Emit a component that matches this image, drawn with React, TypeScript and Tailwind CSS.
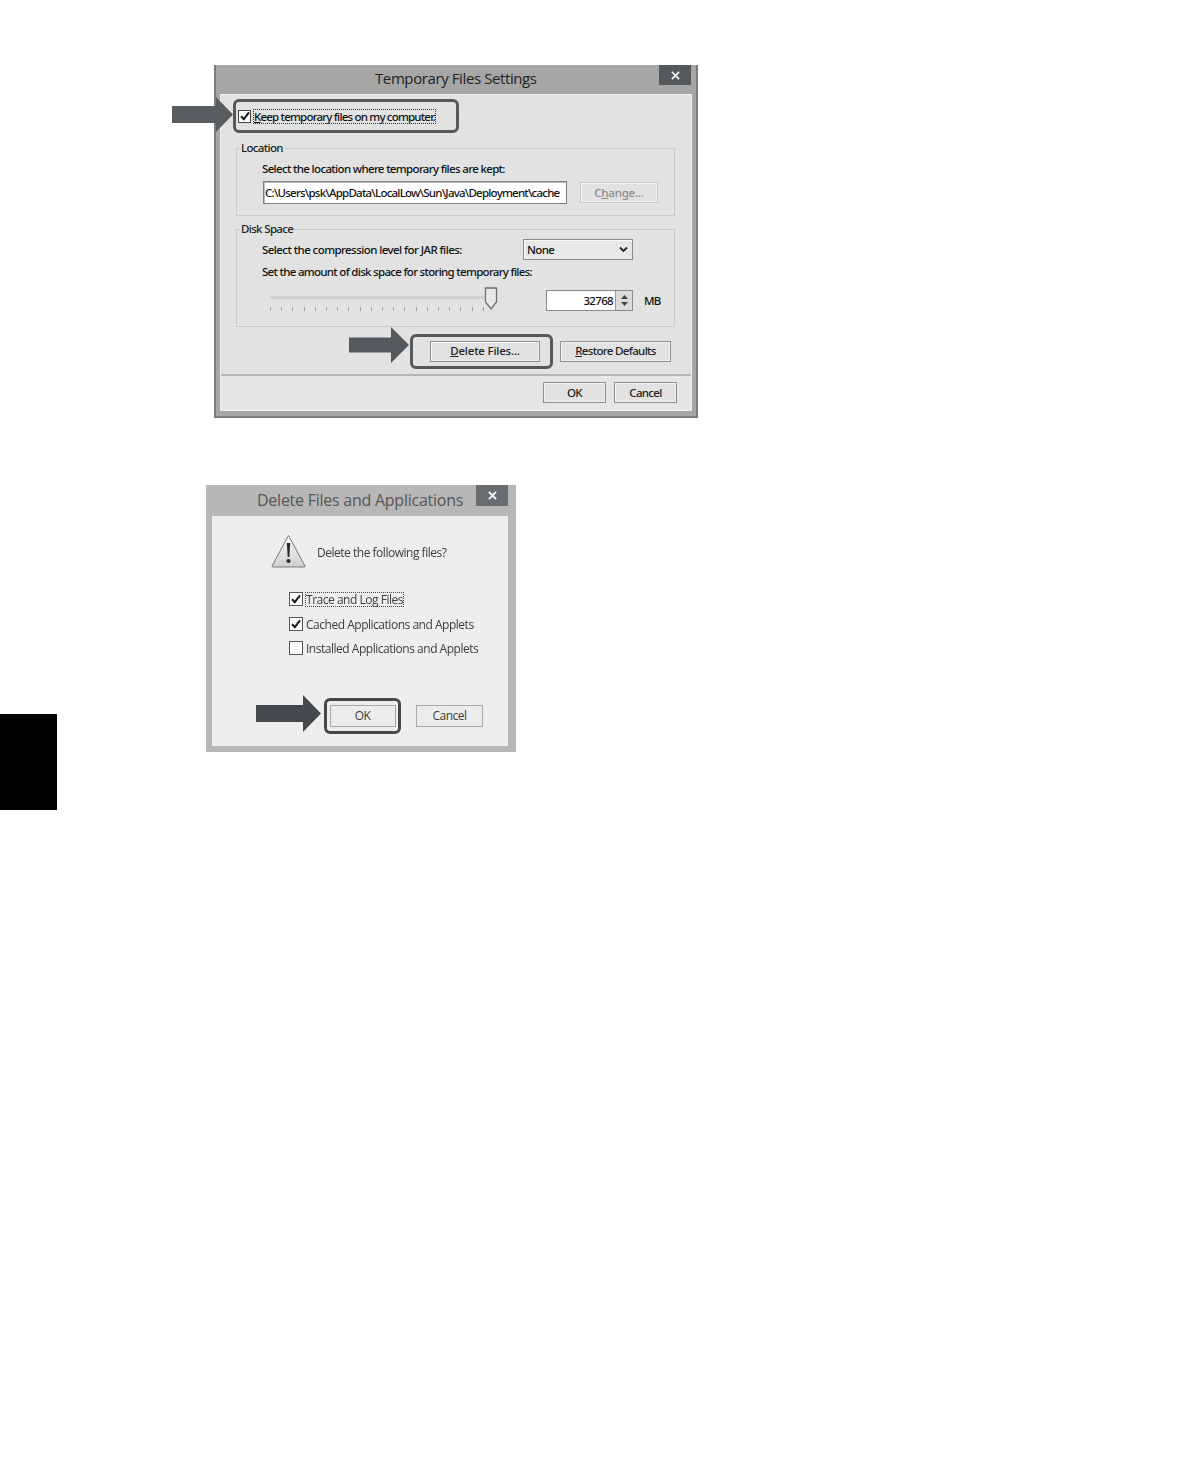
const tahoma = "font-['Noto_Sans','Open_Sans',sans-serif]";
const segoe = "font-['Open_Sans','Noto_Sans',sans-serif]";

function Arrow({ width, height, shaft, head, color, className }: { width: number; height: number; shaft: number; head: number; color: string; className?: string }) {
  const c = height / 2;
  const neck = width - head;
  return (
    <svg width={width} height={height} viewBox={`0 0 ${width} ${height}`} className={`shrink-0 block ${className ?? ""}`}>
      <path
        d={`M0 ${c - shaft / 2} H${neck} V0 L${width} ${c} L${neck} ${height} V${c + shaft / 2} H0 Z`}
        fill={color}
      />
    </svg>
  );
}

function Close({ size }: { size: number }) {
  return (
    <svg width={size} height={size} viewBox="0 0 10 10" className="block">
      <path d="M1 1 L9 9 M9 1 L1 9" stroke="#ffffff" strokeWidth="1.8" />
    </svg>
  );
}

function Tick() {
  return (
    <svg width="10" height="10" viewBox="0 0 10 10" className="block">
      <path d="M1 5.2 L3.8 8.2 L9 1.4" fill="none" stroke="#1a1a1a" strokeWidth="2" />
    </svg>
  );
}

function Btn({ children, w, disabled, wide }: { children: React.ReactNode; w: string; disabled?: boolean; wide?: boolean }) {
  return (
    <div
      className={`${w} h-[21px] shrink-0 flex items-center justify-center border shadow-[inset_1px_1px_0_#f6f6f6,inset_-1px_-1px_0_#f0f0f0] bg-[#e2e2e2] ${
        disabled ? "border-[#c6c6c6] text-[#8a8a8a]" : "border-[#8f8f8f] text-[#222]"
      } ${wide ? "tracking-[-0.2px]" : ""}`}
    >
      <span>{children}</span>
    </div>
  );
}

function Group({ label, h, mt, children }: { label: string; h: string; mt: string; children: React.ReactNode }) {
  return (
    <fieldset className={`${h} ${mt} ml-[15px] w-[439px] border border-[#c9c9c9] pl-[25px] box-border`}>
      <legend className="-ml-[22px] px-[1px] h-[16px] leading-[16px] text-[#222]">{label}</legend>
      {children}
    </fieldset>
  );
}

function TemporaryFiles() {
  return (
    <div className={`${tahoma} relative ml-[157px] w-[484px] h-[353px] bg-[#a6a6a6] border-x-2 border-b-2 border-[#7c7c7c] text-[11.5px] font-medium tracking-[-0.66px] box-border`}>
      <div className="flex h-[29px] relative">
        <div className={`${segoe} ml-[159px] mt-[2px] text-[15px] font-normal tracking-[-0.4px] leading-[22px] text-[#222]`}>
          Temporary Files Settings
        </div>
        <div className="ml-auto mr-[5px] w-[32px] h-[20px] bg-[#56595c] flex items-center justify-center">
          <Close size={9} />
        </div>
      </div>
      <div className="absolute left-[-44px] top-[32px]">
        <Arrow width={61} height={35} shaft={17} head={17} color="#595d60" />
      </div>
      <div className="mx-[4px] h-[317px] bg-[#e2e2e2] border border-[#f0f0f0] flex flex-col box-border">
        <div className="ml-[12px] mt-[4px] w-[226px] h-[34px] border-[3px] border-[#55595c] rounded-[6px] flex items-center pl-[2px] box-border">
          <div className="w-[13px] h-[13px] border border-[#444] bg-white flex items-center justify-center shrink-0">
            <Tick />
          </div>
          <div className="ml-[3px] outline-1 outline-dotted outline-[#333] leading-[13px] text-[#111] whitespace-nowrap tracking-[-0.8px]">
            <u>K</u>eep temporary files on my computer.
          </div>
        </div>
        <Group label="Location" h="h-[76px]" mt="mt-[7px]">
          <div className="mt-[5px] h-[16px] leading-[16px] text-[#111] whitespace-nowrap">
            Select the location where temporary files are kept:
          </div>
          <div className="flex items-center mt-[4px] ml-[1px]">
            <div className="w-[304px] h-[23px] border border-[#7f7f7f] bg-white flex items-center pl-[1px] box-border text-[#111] whitespace-nowrap overflow-hidden shadow-[inset_1px_1px_0_#bbb] tracking-[-0.77px]">
              C:\Users\psk\AppData\LocalLow\Sun\Java\Deployment\cache
            </div>
            <div className="ml-[13px]">
              <Btn w="w-[78px]" disabled wide>
                C<u>h</u>ange...
              </Btn>
            </div>
          </div>
        </Group>
        <Group label="Disk Space" h="h-[106px]" mt="mt-[5px]">
          <div className="flex items-center mt-[2px] h-[21px]">
            <div className="leading-[16px] text-[#111] whitespace-nowrap tracking-[-0.57px]">Select the compression level for JAR files:</div>
            <div className="ml-auto mr-[41px] w-[110px] h-[21px] border border-[#8a8a8a] bg-[#e8e8e8] flex items-center pl-[3px] pr-[4px] justify-between box-border shadow-[inset_1px_1px_0_#fafafa] text-[#111]">
              <span>None</span>
              <svg width="9" height="7" viewBox="0 0 9 7" className="block">
                <path d="M1 1.5 L4.5 5 L8 1.5" fill="none" stroke="#222" strokeWidth="1.8" />
              </svg>
            </div>
          </div>
          <div className="mt-[4px] h-[16px] leading-[16px] text-[#111] whitespace-nowrap tracking-[-0.7px]">
            Set the amount of disk space for storing temporary files:
          </div>
          <div className="flex items-start mt-[7px] ml-[8px]">
            <div className="relative w-[228px] h-[24px] shrink-0">
              <div className="mt-[9px] w-[220px] h-[3px] bg-[#d0d0d0]" />
              <div className="mt-[8px] w-[214px] flex justify-between">
                {Array.from({ length: 20 }).map((_, i) => (
                  <div key={i} className="w-[1px] h-[4px] bg-[#a0a0a0]" />
                ))}
              </div>
              <svg width="14" height="24" viewBox="0 0 14 24" className="absolute left-[214px] top-0 block">
                <path d="M1.5 1 H12.5 V15 L7 22 L1.5 15 Z" fill="#e8e8e8" stroke="#6f6f6f" strokeWidth="1.3" />
              </svg>
            </div>
            <div className="ml-[48px] mt-[3px] w-[87px] h-[21px] flex border border-[#8a8a8a] bg-white box-border">
              <div className="flex-1 text-right pr-[2px] leading-[19px] text-[#111]">32768</div>
              <div className="w-[17px] bg-[#dcdcdc] flex flex-col items-center justify-center gap-[3px] border-l border-[#9a9a9a]">
                <svg width="7" height="4" viewBox="0 0 7 4" className="block"><path d="M3.5 0 L7 4 H0 Z" fill="#444" /></svg>
                <svg width="7" height="4" viewBox="0 0 7 4" className="block"><path d="M0 0 H7 L3.5 4 Z" fill="#444" /></svg>
              </div>
            </div>
            <div className="ml-[11px] mt-[3px] leading-[21px] text-[#111] tracking-[-0.9px]">MB</div>
          </div>
        </Group>
        <div className="flex items-center ml-[128px] mt-[6px] h-[36px]">
          <Arrow width={60} height={36} shaft={15} head={18} color="#55595c" className="mb-[12px]" />
          <div className="ml-[1px] w-[143px] h-[35px] border-[3px] border-[#55595c] rounded-[6px] pl-[17px] flex items-center box-border">
            <Btn w="w-[110px]" wide>
              <u>D</u>elete Files...
            </Btn>
          </div>
          <div className="ml-[7px]">
            <Btn w="w-[111px]">
              <u>R</u>estore Defaults
            </Btn>
          </div>
        </div>
        <div className="mt-[5px] flex-1 border-t-2 border-[#b5b5b5] bg-[#e6e6e6] flex justify-end gap-[8px] pt-[6px] pr-[14px]">
          <Btn w="w-[63px]">OK</Btn>
          <Btn w="w-[63px]">Cancel</Btn>
        </div>
      </div>
    </div>
  );
}

function CheckRow({ label, checked, focus, mt }: { label: string; checked?: boolean; focus?: boolean; mt: string }) {
  return (
    <div className={`flex items-center ml-[77px] ${mt} h-[14px]`}>
      <div className="w-[14px] h-[14px] border border-[#555] bg-white flex items-center justify-center shrink-0 box-border">
        {checked && <Tick />}
      </div>
      <div className={`ml-[3px] leading-[13px] whitespace-nowrap ${focus ? "outline-1 outline-dotted outline-[#444]" : ""}`}>{label}</div>
    </div>
  );
}

function DeleteFiles() {
  return (
    <div className={`${segoe} relative ml-[149px] mt-[67px] w-[310px] h-[267px] bg-[#b7b7b7] text-[12px] text-[#3d3d3d] tracking-[-0.48px]`}>
      <div className="flex h-[31px]">
        <div className="ml-[51px] mt-[4px] text-[16px] tracking-[-0.25px] leading-[22px] text-[#555]">Delete Files and Applications</div>
        <div className="ml-auto mr-[8px] w-[32px] h-[21px] bg-[#696d71] flex items-center justify-center">
          <Close size={9} />
        </div>
      </div>
      <div className="mx-[6px] w-[296px] h-[230px] bg-[#eeeeee] flex flex-col box-border">
        <div className="flex items-center ml-[59px] mt-[18px] h-[34px]">
          <svg width="35" height="34" viewBox="0 0 35 34" className="block shrink-0">
            <defs>
              <linearGradient id="warn" x1="0" y1="0" x2="0" y2="1">
                <stop offset="0" stopColor="#fafafa" />
                <stop offset="1" stopColor="#cfcfcf" />
              </linearGradient>
            </defs>
            <path d="M17.5 1.5 L34 32 Q34 33 33 33 H2 Q1 33 1 32 Z" fill="url(#warn)" stroke="#7a7a7a" strokeWidth="1" strokeLinejoin="round" />
            <path d="M15.8 9 H19.2 L18.3 23 H16.7 Z" fill="#2a2a2a" />
            <circle cx="17.5" cy="27" r="2.1" fill="#2a2a2a" />
          </svg>
          <div className="ml-[11px] mt-[3px] whitespace-nowrap">Delete the following files?</div>
        </div>
        <CheckRow mt="mt-[24px]" label="Trace and Log Files" checked focus />
        <CheckRow mt="mt-[11px]" label="Cached Applications and Applets" checked />
        <CheckRow mt="mt-[10px]" label="Installed Applications and Applets" />
        <div className="flex items-center ml-[44px] mt-[42px] h-[38px]">
          <Arrow width={65} height={37} shaft={17} head={18} color="#45494c" className="mb-[5px]" />
          <div className="ml-[3px] w-[77px] h-[36px] border-[3px] border-[#45494c] rounded-[6px] flex items-center justify-center box-border pb-[1px]">
            <div className="w-[66px] h-[22px] border border-[#a8a8a8] bg-[#ececec] flex items-center justify-center box-border">OK</div>
          </div>
          <div className="ml-[15px] mb-[1px] w-[67px] h-[22px] border border-[#a8a8a8] bg-[#ececec] flex items-center justify-center box-border">Cancel</div>
        </div>
      </div>
    </div>
  );
}

export default function App() {
  return (
    <div className="flex w-[1190px] h-[1457px] bg-white overflow-hidden">
      <div className="w-[57px] h-[96px] mt-[714px] bg-black shrink-0" />
      <div className="pt-[65px] flex-1 blur-[0.3px]">
        <TemporaryFiles />
        <DeleteFiles />
      </div>
    </div>
  );
}
